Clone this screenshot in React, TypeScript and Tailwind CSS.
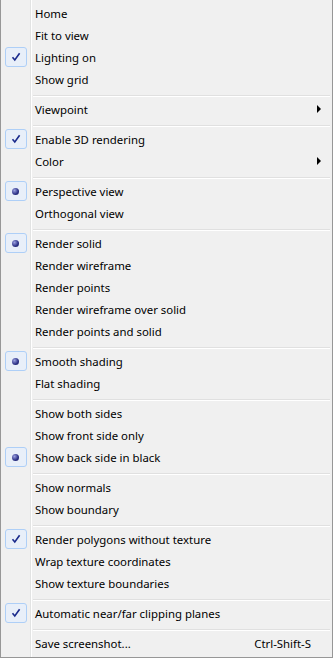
import React from "react";

type Mark = "check" | "radio" | null;
interface MenuItem {
  label: string;
  mark?: Mark;
  submenu?: boolean;
  shortcut?: string;
}

// null = separator
const items: (MenuItem | null)[] = [
  { label: "Home" },
  { label: "Fit to view" },
  { label: "Lighting on", mark: "check" },
  { label: "Show grid" },
  null,
  { label: "Viewpoint", submenu: true },
  null,
  { label: "Enable 3D rendering", mark: "check" },
  { label: "Color", submenu: true },
  null,
  { label: "Perspective view", mark: "radio" },
  { label: "Orthogonal view" },
  null,
  { label: "Render solid", mark: "radio" },
  { label: "Render wireframe" },
  { label: "Render points" },
  { label: "Render wireframe over solid" },
  { label: "Render points and solid" },
  null,
  { label: "Smooth shading", mark: "radio" },
  { label: "Flat shading" },
  null,
  { label: "Show both sides" },
  { label: "Show front side only" },
  { label: "Show back side in black", mark: "radio" },
  null,
  { label: "Show normals" },
  { label: "Show boundary" },
  null,
  { label: "Render polygons without texture", mark: "check" },
  { label: "Wrap texture coordinates" },
  { label: "Show texture boundaries" },
  null,
  { label: "Automatic near/far clipping planes", mark: "check" },
  null,
  { label: "Save screenshot...", shortcut: "Ctrl-Shift-S" },
];

const MarkBox = ({ mark }: { mark: Mark }) => {
  if (!mark) return <div className="w-[22px] h-[20px]" />;
  return (
    <div className="w-[22px] h-[20px] rounded-[3px] border border-[#aecff7] bg-[#e8eff9] flex items-center justify-center">
      {mark === "check" ? (
        <svg width="10" height="10" viewBox="0 0 10 10">
          <path d="M1.5 5.2 L3.8 8 L8.6 1.2" fill="none" stroke="#1a2a8c" strokeWidth="1.6" />
        </svg>
      ) : (
        <div className="w-[7px] h-[7px] rounded-full bg-[radial-gradient(circle_at_35%_35%,#9aa0e0,#2a2f85_60%,#1c1f5c)]" />
      )}
    </div>
  );
};

const Row = ({ item }: { item: MenuItem }) => (
  <div className="h-[22px] flex items-center">
    <div className="w-[30px] flex justify-center pl-[2px] pr-[3px]">
      <MarkBox mark={item.mark ?? null} />
    </div>
    <div className="flex-1 flex items-center pt-[2px] pl-[4px] pr-[11px] text-[11.4px] text-black">
      <span className="flex-1">{item.label}</span>
      {item.shortcut && <span className="pr-[10px]">{item.shortcut}</span>}
      {item.submenu && (
        <span className="w-0 h-0 -mt-[2px] border-y-[4px] border-y-transparent border-l-[4px] border-l-black" />
      )}
    </div>
  </div>
);

const Separator = () => (
  <div className="h-[8px] pt-[5px] pl-[32px] pr-[2px]">
    <div className="h-px bg-[#e0e0e0]" />
    <div className="h-px bg-white" />
  </div>
);

export default function App() {
  return (
    <div
      className="w-[333px] h-[658px] bg-[#f0f0f0] border-x border-b border-[#979797] pt-[2px] bg-[linear-gradient(to_right,#f0f0f0_29px,#e2e3e3_29px,#e2e3e3_30px,#ffffff_30px,#ffffff_31px,#f0f0f0_31px)]"
      style={{ fontFamily: '"Noto Sans", "Open Sans", sans-serif' }}
    >
      {items.map((it, i) => (it ? <Row key={i} item={it} /> : <Separator key={i} />))}
    </div>
  );
}
